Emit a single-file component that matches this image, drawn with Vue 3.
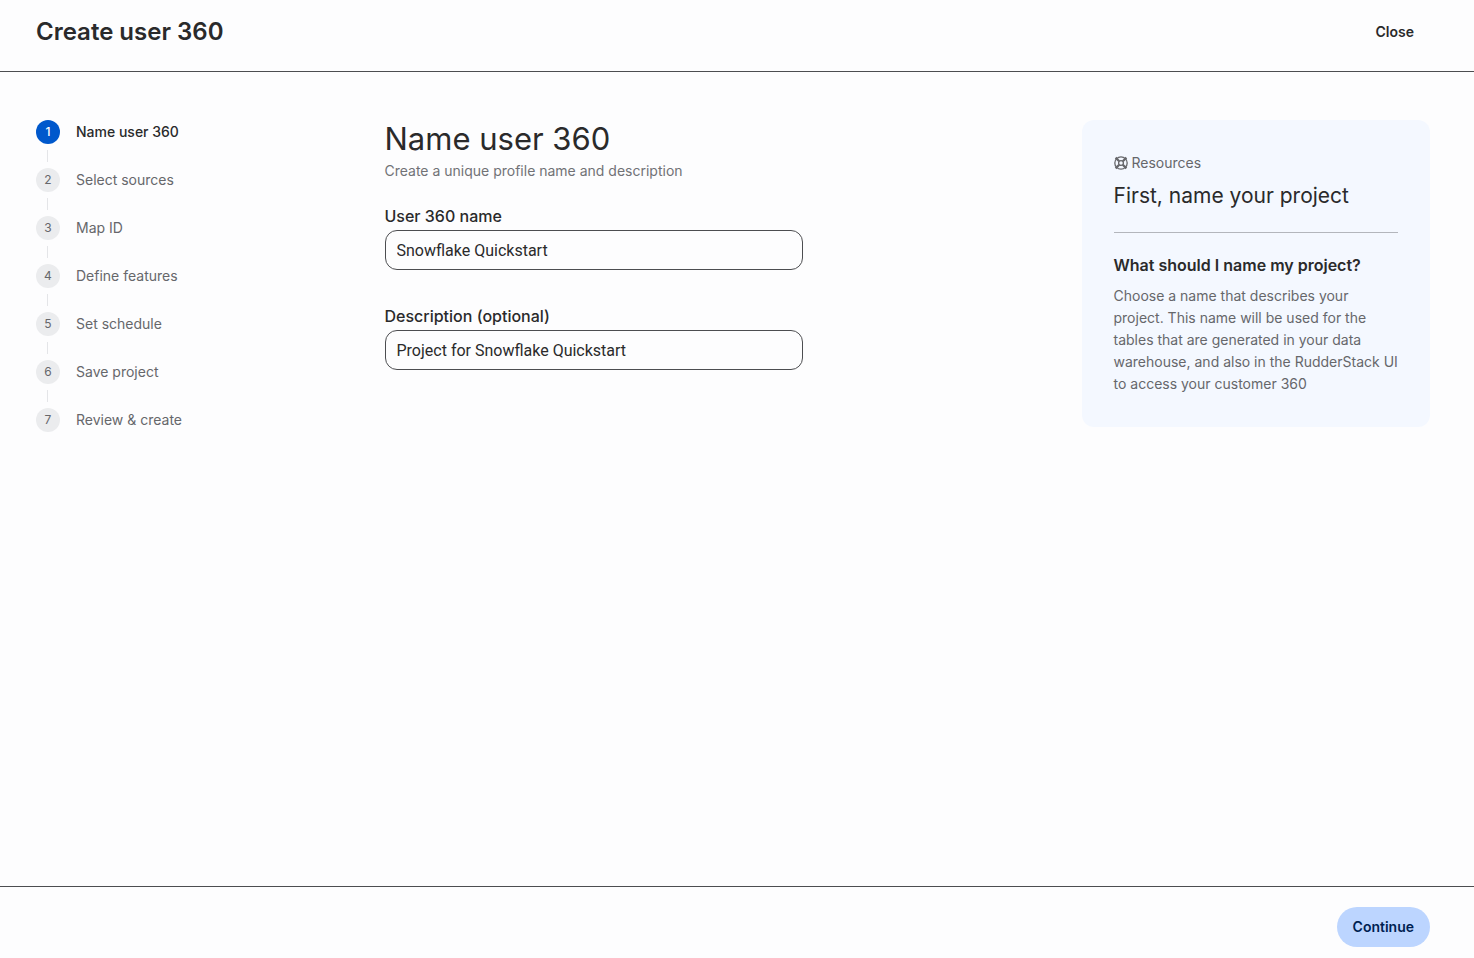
<script setup>
import { ref } from 'vue'

const steps = [
  'Name user 360',
  'Select sources',
  'Map ID',
  'Define features',
  'Set schedule',
  'Save project',
  'Review & create',
]
const current = ref(0)
const name = ref('Snowflake Quickstart')
const description = ref('Project for Snowflake Quickstart')
</script>

<template>
  <div class="page">
    <header class="header">
      <h1 class="header-title">Create user 360</h1>
      <button type="button" class="close">Close</button>
    </header>

    <div class="body">
      <nav aria-label="Progress">
        <ol class="steps">
          <li
            v-for="(step, i) in steps"
            :key="step"
            class="step"
            :class="{ active: i === current }"
            :aria-current="i === current ? 'step' : undefined"
          >
            <span class="badge">{{ i + 1 }}</span>
            <span class="step-label">{{ step }}</span>
          </li>
        </ol>
      </nav>

      <main class="main">
        <h2 class="title">Name user 360</h2>
        <p class="subtitle">Create a unique profile name and description</p>
        <form class="form" @submit.prevent>
          <div class="field">
            <label for="profile-name">User 360 name</label>
            <input id="profile-name" v-model="name" type="text" />
          </div>
          <div class="field">
            <label for="profile-description">Description (optional)</label>
            <input id="profile-description" v-model="description" type="text" />
          </div>
        </form>
      </main>

      <aside class="card">
        <div class="resources">
          <svg viewBox="0 0 14 14" width="14" height="14" fill="none" stroke="currentColor" aria-hidden="true">
            <circle cx="7" cy="7" r="6.2" stroke-width="1.3" />
            <circle cx="7" cy="7" r="2.4" stroke-width="1.3" />
            <path
              d="M1.6 1.6 5.2 5.2M12.4 1.6 8.8 5.2M1.6 12.4 5.2 8.8M12.4 12.4 8.8 8.8"
              stroke-width="2.2"
            />
          </svg>
          <span>Resources</span>
        </div>
        <h2 class="card-title">First, name your project</h2>
        <hr class="divider" />
        <h3 class="question">What should I name my project?</h3>
        <p class="answer">
          Choose a name that describes your project. This name will be used for the tables that are
          generated in your data warehouse, and also in the RudderStack UI to access your customer 360
        </p>
      </aside>
    </div>

    <footer class="footer">
      <button type="button" class="continue">Continue</button>
    </footer>
  </div>
</template>

<style>
body {
  margin: 0;
  background: #fdfdfe;
}
</style>

<style scoped>
.page {
  display: flex;
  flex-direction: column;
  min-height: 100vh;
  font-family: Inter, "Liberation Sans", sans-serif;
  font-size: 14px;
  line-height: 22px;
  color: #2a2a2b;
}

h1,
h2,
h3,
p,
ol {
  margin: 0;
  padding: 0;
}

button,
input {
  font: inherit;
  color: inherit;
}

.header {
  display: flex;
  align-items: center;
  justify-content: space-between;
  padding: 12px 44px 19px 36px;
  border-bottom: 1px solid #4c4d50;
}

.header-title {
  font-size: 24px;
  line-height: 38px;
  font-weight: 600;
}

.close {
  height: 40px;
  padding: 0 16px;
  border: 0;
  background: none;
  font-weight: 600;
}

.body {
  display: grid;
  grid-template-columns: 1fr 2fr 1fr;
  align-items: start;
  flex: 1;
  padding: 48px 44px 48px 36px;
}

.steps {
  display: flex;
  flex-direction: column;
  gap: 24px;
  list-style: none;
}

.step {
  position: relative;
  display: flex;
  align-items: center;
  gap: 16px;
  height: 24px;
  color: #66676b;
}

.step:not(:last-child)::after {
  content: "";
  position: absolute;
  left: 11px;
  top: 30px;
  width: 1px;
  height: 12px;
  background: #e4e5e8;
}

.badge {
  display: flex;
  align-items: center;
  justify-content: center;
  width: 24px;
  height: 24px;
  border-radius: 50%;
  background: #ebecee;
  font-size: 12px;
}

.active {
  color: #2a2a2b;
  font-weight: 500;
}

.active .badge {
  background: #0058cc;
  color: #fff;
}

.title {
  font-size: 31px;
  line-height: 38px;
  font-weight: 400;
}

.subtitle {
  margin-top: 2px;
  color: #717276;
}

.form {
  display: flex;
  flex-direction: column;
  gap: 34px;
  width: 60%;
  margin-top: 22px;
}

.field {
  display: flex;
  flex-direction: column;
  gap: 2px;
}

.field label {
  font-size: 16px;
  line-height: 24px;
  font-weight: 500;
}

.field input {
  box-sizing: border-box;
  width: 100%;
  height: 40px;
  padding: 0 11px;
  border: 1px solid #4c4d50;
  border-radius: 12px;
  background: #fdfdfe;
  font-family: Roboto, Inter, sans-serif;
  font-size: 16px;
  outline: none;
}

.card {
  padding: 32px;
  border-radius: 12px;
  background: #f4f8ff;
}

.resources {
  display: flex;
  align-items: center;
  gap: 4px;
  color: #66676b;
}

.card-title {
  margin-top: 6px;
  font-size: 21px;
  line-height: 32px;
  font-weight: 400;
}

.divider {
  margin: 20px 0;
  border: 0;
  border-top: 1px solid #b3b6bc;
}

.question {
  font-size: 16px;
  line-height: 24px;
  font-weight: 600;
}

.answer {
  margin-top: 8px;
  color: #66676b;
}

.footer {
  display: flex;
  justify-content: flex-end;
  padding: 20px 44px 11px;
  border-top: 1px solid #4c4d50;
}

.continue {
  height: 40px;
  padding: 0 16px;
  border: 0;
  border-radius: 20px;
  background: #bcd5ff;
  color: #001f52;
  font-weight: 600;
}
</style>
